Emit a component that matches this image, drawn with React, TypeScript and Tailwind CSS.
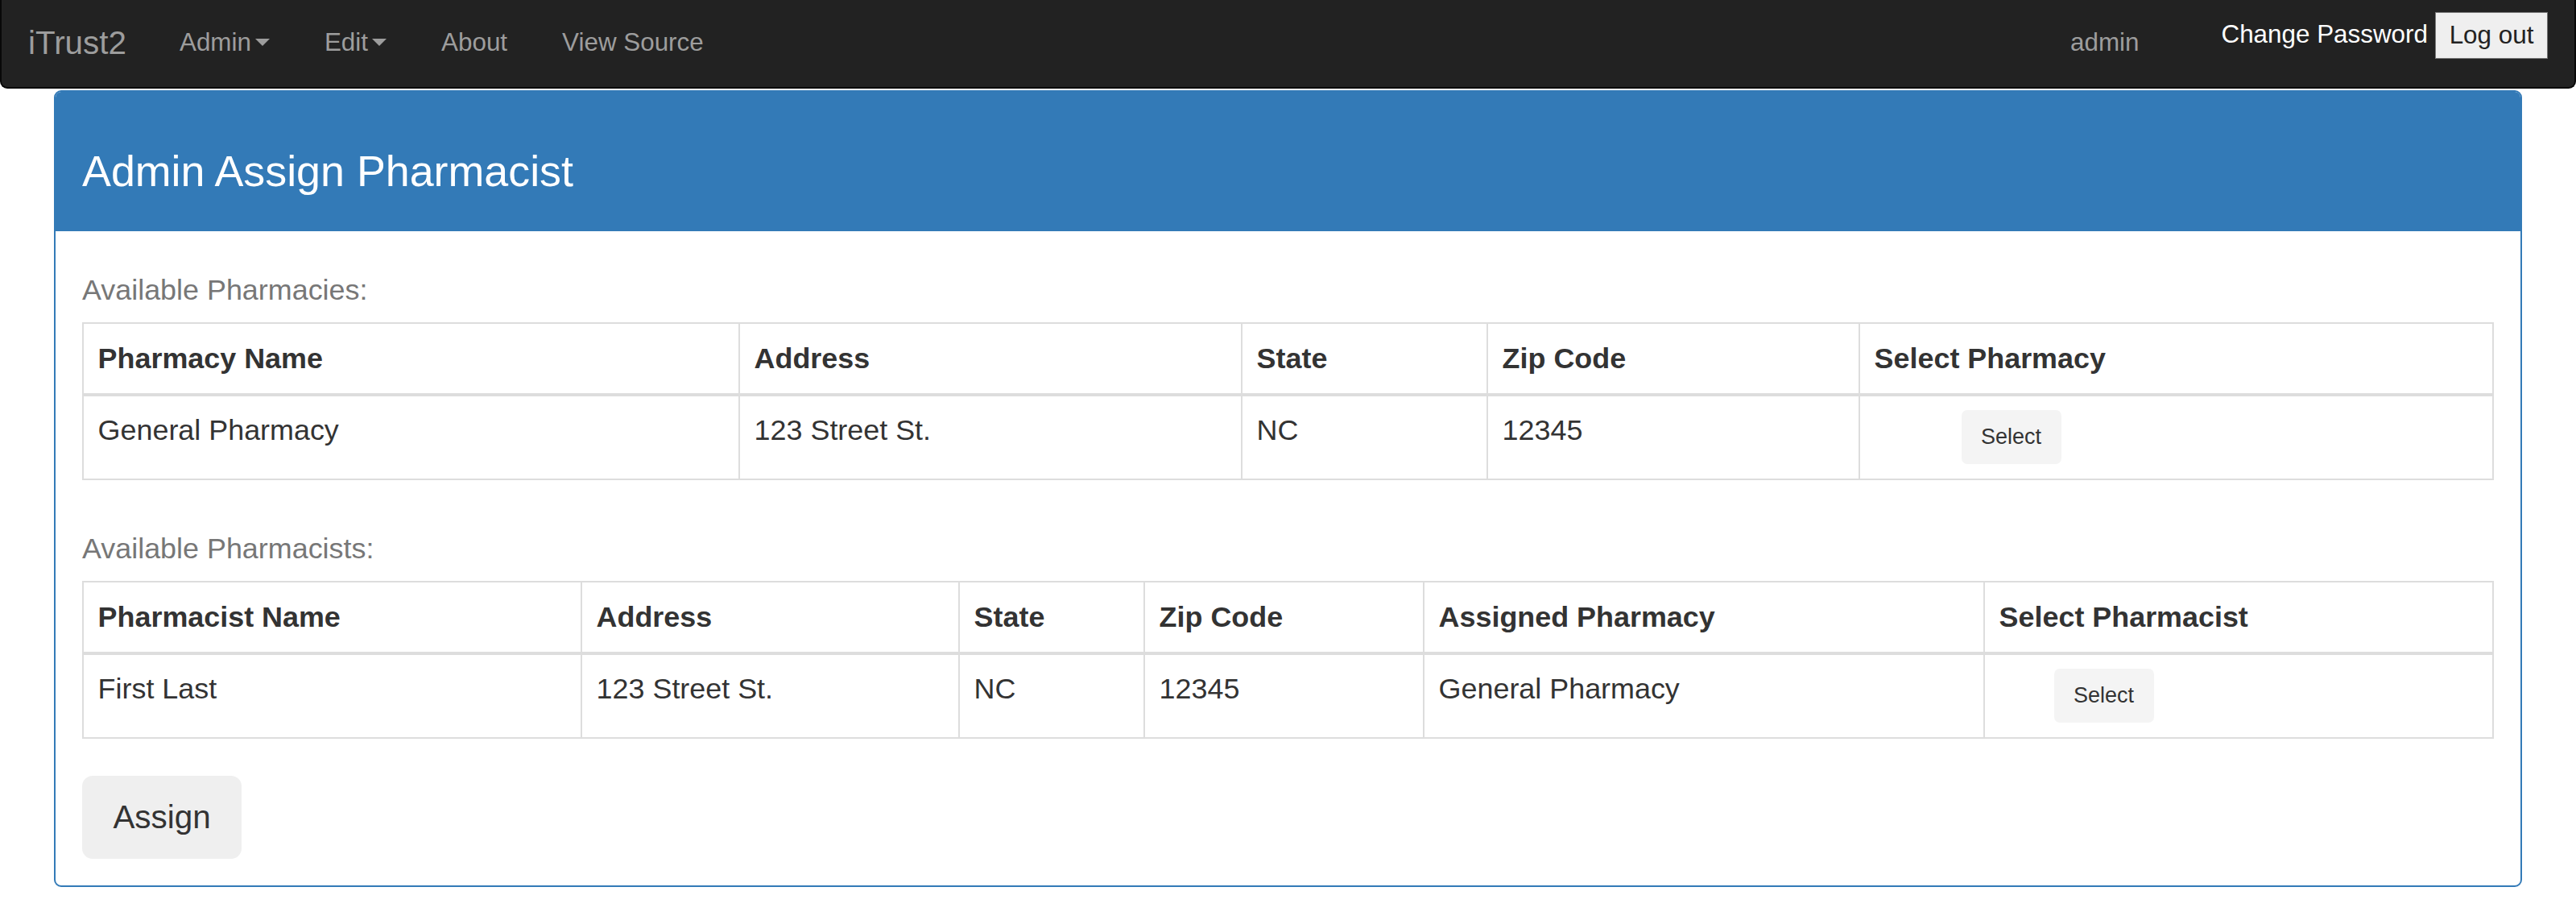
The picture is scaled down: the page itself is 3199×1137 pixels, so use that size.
import React from "react"

/****** DATA ******/
const NAV_LINKS = [
    { label: "Admin", caret: true },
    { label: "Edit", caret: true },
    { label: "About", caret: false },
    { label: "View Source", caret: false },
]

const PHARMACY_COLS = [
    { title: "Pharmacy Name", w: "w-[815px]" },
    { title: "Address", w: "w-[624px]" },
    { title: "State", w: "w-[305px]" },
    { title: "Zip Code", w: "w-[462px]" },
    { title: "Select Pharmacy", w: "w-[787px]" },
]
const PHARMACY_ROWS = [
    ["General Pharmacy", "123 Street St.", "NC", "12345"],
]

const PHARMACIST_COLS = [
    { title: "Pharmacist Name", w: "w-[619px]" },
    { title: "Address", w: "w-[469px]" },
    { title: "State", w: "w-[230px]" },
    { title: "Zip Code", w: "w-[347px]" },
    { title: "Assigned Pharmacy", w: "w-[696px]" },
    { title: "Select Pharmacist", w: "w-[632px]" },
]
const PHARMACIST_ROWS = [
    ["First Last", "123 Street St.", "NC", "12345", "General Pharmacy"],
]

// ReactFunctionComponent
const Caret = () => (
    <span className="ml-[5px] inline-block h-0 w-0 border-x-[9px] border-t-[9px] border-x-transparent border-t-[#9d9d9d] align-middle" />
)

const NavBar = () => {
    return (
        <nav className="flex h-[110px] items-center rounded-b-[9px] border-2 border-t-0 border-[#080808] bg-[#222] pb-[3px]">
            <a className="pl-[33px] pr-[32px] text-[40.4px] leading-[44px] text-[#9d9d9d]">iTrust2</a>
            {NAV_LINKS.map((link, index) => (
                <a key={index} className="flex items-center px-[34px] text-[31.4px] leading-[44px] text-[#9d9d9d]">
                    {link.label}
                    {link.caret && <Caret />}
                </a>
            ))}
            <div className="ml-auto flex h-full items-start">
                <a className="mt-[31px] px-[33px] text-[31.4px] leading-[44px] text-[#9d9d9d]">admin</a>
                <a className="ml-[69px] mt-[21px] text-[31.4px] leading-[44px] text-white">Change Password</a>
                <button className="ml-[9px] mr-[33px] mt-[15px] h-[58px] w-[140px] border border-[#767676] bg-[#efefef] text-[31.4px] text-[#222]">
                    Log out
                </button>
            </div>
        </nav>
    )
}

const SelectBtn = ({ offset }: any) => (
    <div className="flex">
        <button className={`${offset} h-[67px] w-[124px] rounded-[7px] bg-[#f4f4f4] text-[27px] leading-none text-[#333]`}>
            Select
        </button>
    </div>
)

const DataTable = ({ cols, rows, btnOffset }: any) => {
    return (
        <table className="w-full table-fixed border-collapse text-[35.9px] leading-[50.3px] text-[#333]">
            <colgroup>
                {cols.map((c: any, i: number) => <col key={i} className={c.w} />)}
            </colgroup>
            <thead>
                <tr>
                    {cols.map((c: any, i: number) => (
                        <th key={i} className="border-2 border-b-4 border-[#ddd] p-[17.6px] text-left align-bottom font-bold">
                            {c.title}
                        </th>
                    ))}
                </tr>
            </thead>
            <tbody>
                {rows.map((row: any, index: number) => (
                    <tr key={index}>
                        {row.map((cell: string, i: number) => (
                            <td key={i} className="border-2 border-[#ddd] p-[17.6px] align-top">{cell}</td>
                        ))}
                        <td className="border-2 border-[#ddd] p-[17.6px] align-top">
                            <SelectBtn offset={btnOffset} />
                        </td>
                    </tr>
                ))}
            </tbody>
        </table>
    )
}

export default function App() {
    /****** HTML ******/
    return (
        <div className="min-h-screen bg-white font-['Liberation_Sans',Arial,sans-serif] text-[#333]">
            <NavBar />
            <div className="mx-[67px] mt-[2px] overflow-hidden rounded-[9px] border-2 border-[#337ab7]">
                <div className="h-[173px] bg-[#337ab7] px-[33px] pt-[69px]">
                    <h3 className="text-[53.8px] font-normal leading-[58px] text-white">Admin Assign Pharmacist</h3>
                </div>
                <div className="px-[33px] pb-[33px] pt-[48px]">
                    <div className="mb-[15px] text-[35.9px] leading-[50.3px] text-[#777]">Available Pharmacies:</div>
                    <DataTable cols={PHARMACY_COLS} rows={PHARMACY_ROWS} btnOffset="ml-[108px]" />

                    <div className="mb-[15px] mt-[60px] text-[35.9px] leading-[50.3px] text-[#777]">Available Pharmacists:</div>
                    <DataTable cols={PHARMACIST_COLS} rows={PHARMACIST_ROWS} btnOffset="ml-[68px]" />

                    <button className="mt-[46px] h-[103px] w-[198px] rounded-[13px] bg-[#efefef] text-[40.4px] text-[#333]">
                        Assign
                    </button>
                </div>
            </div>
        </div>
    )
}
